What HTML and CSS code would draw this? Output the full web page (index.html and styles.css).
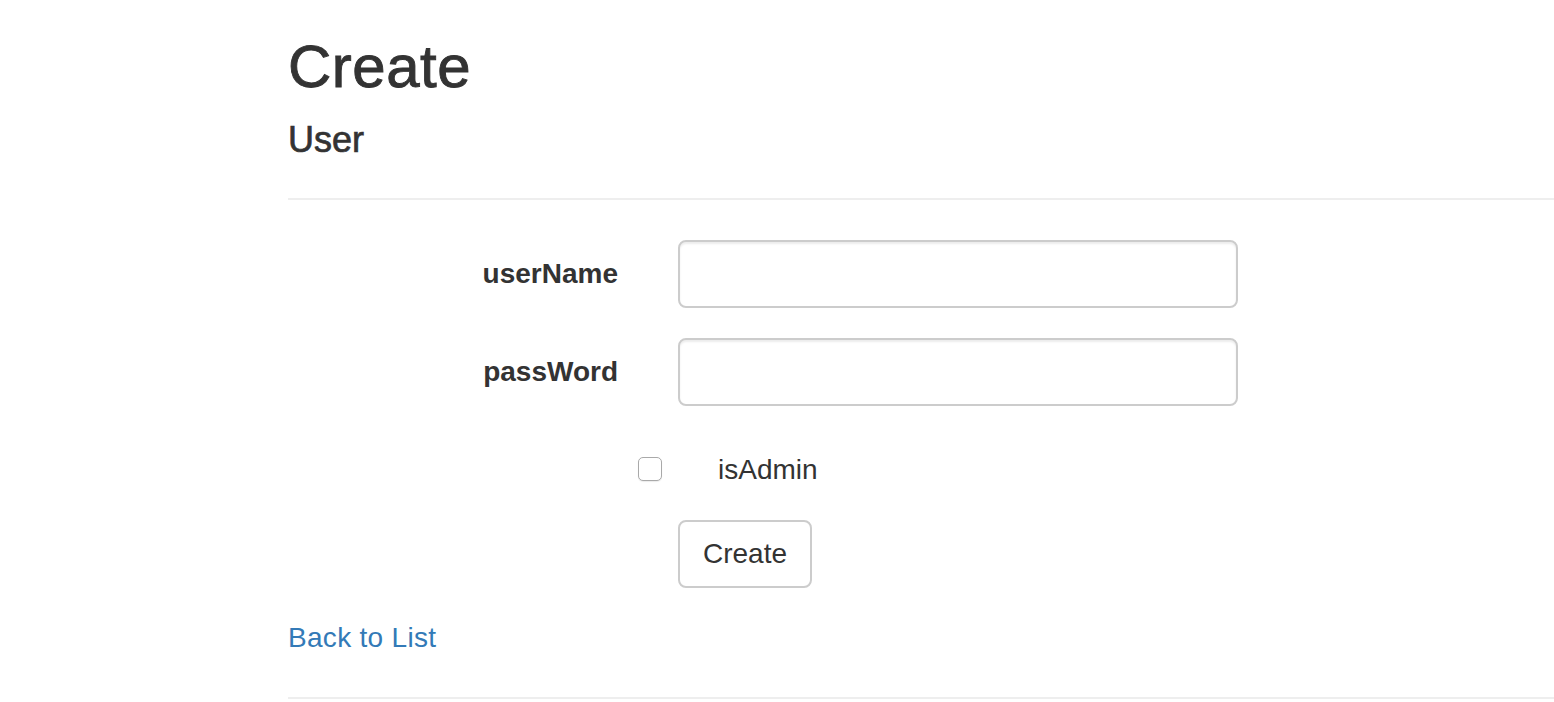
FILE: index.html
```html
<!DOCTYPE html>
<html lang="en">
<head>
<meta charset="utf-8">
<title>Create</title>
<link rel="stylesheet" href="styles.css">
</head>
<body>
<div class="container">
  <h2 class="title">Create</h2>
  <form class="form">
    <h4 class="subtitle">User</h4>
    <hr class="rule">
    <div class="form-group">
      <label class="control-label" for="userName">userName</label>
      <div class="field"><input class="form-control" id="userName" type="text"></div>
    </div>
    <div class="form-group">
      <label class="control-label" for="passWord">passWord</label>
      <div class="field"><input class="form-control" id="passWord" type="text"></div>
    </div>
    <div class="form-group">
      <div class="spacer"></div>
      <div class="field">
        <div class="checkbox">
          <input class="check" id="isAdmin" type="checkbox">
          <label class="check-label" for="isAdmin">isAdmin</label>
        </div>
      </div>
    </div>
    <div class="form-group">
      <div class="spacer"></div>
      <div class="field"><button class="btn" type="button">Create</button></div>
    </div>
  </form>
  <div class="back"><a class="link" href="#">Back to List</a></div>
  <hr class="rule footer-rule">
</div>
</body>
</html>
```
FILE: styles.css
```css
* { box-sizing: border-box; }
html, body { margin: 0; padding: 0; background: #fff; }
body {
  font-family: "Liberation Sans", Arial, Helvetica, sans-serif;
  font-size: 28px;
  line-height: 40px;
  color: #333;
}
.container {
  padding-left: 288px;
  padding-top: 34px;
}
.title {
  margin: 0 0 20px;
  font-size: 60px;
  line-height: 66px;
  font-weight: 500;
  letter-spacing: 0.5px;
  -webkit-text-stroke: 0.9px #333;
}
.form { margin: 0; }
.subtitle {
  margin: 20px 0 0;
  font-size: 36px;
  line-height: 39.6px;
  font-weight: 500;
  -webkit-text-stroke: 0.7px #333;
}
.rule {
  margin: 38px 0 40px;
  border: 0;
  border-top: 2px solid #eee;
  height: 0;
}
.form-group {
  display: flex;
  margin-bottom: 30px;
}
.control-label, .spacer {
  flex: 0 0 360px;
  padding-right: 30px;
  padding-top: 14px;
  text-align: right;
  font-weight: bold;
}
.field {
  padding-left: 30px;
}
.form-control {
  display: block;
  width: 560px;
  height: 68px;
  padding: 12px 24px;
  font: inherit;
  color: #555;
  background: #fff;
  border: 2px solid #ccc;
  border-radius: 8px;
  box-shadow: inset 0 2px 2px rgba(0,0,0,.075);
  outline: none;
}
.checkbox {
  position: relative;
  padding-top: 14px;
  padding-left: 40px;
  min-height: 54px;
}
.check {
  -webkit-appearance: none;
  appearance: none;
  position: absolute;
  left: -40px;
  top: 21px;
  margin: 0;
  width: 24px;
  height: 24px;
  border: 1.5px solid #a9a9a9;
  border-radius: 5px;
  background: #fff;
  box-shadow: 0 1px 1px rgba(0,0,0,.08);
}
.check-label { font-weight: normal; }
.btn {
  display: inline-block;
  padding: 12px 23px;
  font: inherit;
  color: #333;
  background: #fff;
  border: 2px solid #ccc;
  border-radius: 8px;
  cursor: pointer;
}
.link { color: #337ab7; text-decoration: none; letter-spacing: 0.3px; }
.footer-rule { margin-top: 39px; margin-bottom: 0; }
```
